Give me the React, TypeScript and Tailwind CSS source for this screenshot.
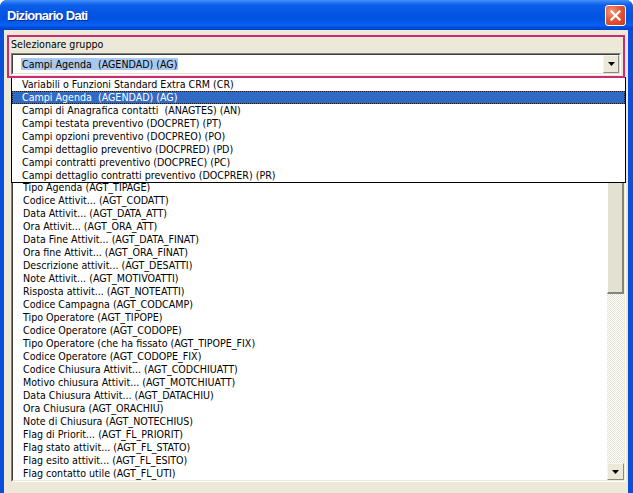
const groups = [
  "Variabili o Funzioni Standard Extra CRM (CR)",
  "Campi Agenda  (AGENDAD) (AG)",
  "Campi di Anagrafica contatti  (ANAGTES) (AN)",
  "Campi testata preventivo (DOCPRET) (PT)",
  "Campi opzioni preventivo (DOCPREO) (PO)",
  "Campi dettaglio preventivo (DOCPRED) (PD)",
  "Campi contratti preventivo (DOCPREC) (PC)",
  "Campi dettaglio contratti preventivo (DOCPRER) (PR)",
];

const fields = [
  "Tipo Agenda (AGT_TIPAGE)",
  "Codice Attivit... (AGT_CODATT)",
  "Data Attivit... (AGT_DATA_ATT)",
  "Ora Attivit... (AGT_ORA_ATT)",
  "Data Fine Attivit... (AGT_DATA_FINAT)",
  "Ora fine Attivit... (AGT_ORA_FINAT)",
  "Descrizione attivit... (AGT_DESATTI)",
  "Note Attivit... (AGT_MOTIVOATTI)",
  "Risposta attivit... (AGT_NOTEATTI)",
  "Codice Campagna (AGT_CODCAMP)",
  "Tipo Operatore (AGT_TIPOPE)",
  "Codice Operatore (AGT_CODOPE)",
  "Tipo Operatore (che ha fissato (AGT_TIPOPE_FIX)",
  "Codice Operatore (AGT_CODOPE_FIX)",
  "Codice Chiusura Attivit... (AGT_CODCHIUATT)",
  "Motivo chiusura Attivit... (AGT_MOTCHIUATT)",
  "Data Chiusura Attivit... (AGT_DATACHIU)",
  "Ora Chiusura (AGT_ORACHIU)",
  "Note di Chiusura (AGT_NOTECHIUS)",
  "Flag di Priorit... (AGT_FL_PRIORIT)",
  "Flag stato attivit... (AGT_FL_STATO)",
  "Flag esito attivit... (AGT_FL_ESITO)",
  "Flag contatto utile (AGT_FL_UTI)",
];

function DownArrow() {
  return (
    <svg width="7" height="4" viewBox="0 0 7 4">
      <path d="M0 0h7L3.5 4z" fill="#000" />
    </svg>
  );
}

function ArrowButton({ className }: { className?: string }) {
  return (
    <div className={"flex items-center justify-center bg-[#ece9d8] border-t border-l border-[#f6f5ef] border-r border-b border-r-[#8a897f] border-b-[#8a897f] " + (className ?? "")}>
      <DownArrow />
    </div>
  );
}

export default function App() {
  return (
    <div className="w-[633px] h-[493px] overflow-hidden flex flex-col bg-[#0a4fdc] rounded-t-[7px] font-['DejaVu_Sans_Condensed','Liberation_Sans',sans-serif] text-[10.6px] leading-[13px] text-black">
      {/* title bar */}
      <div className="h-[30px] shrink-0 flex items-center justify-between pl-[7px] pr-[7px] bg-[linear-gradient(to_bottom,#4593f8_0px,#2b7cf3_2px,#0c5fe9_5px,#0456e6_12px,#0052e0_18px,#045cec_23px,#0a62f2_25px,#0050e0_27px,#0040cc_30px)]">
        <span className="font-['Liberation_Sans',sans-serif] font-bold text-[13px] tracking-[-0.7px] text-white [text-shadow:1px_1px_#0b2a94]">
          Dizionario Dati
        </span>
        <div className="w-[21px] h-[21px] rounded-[3px] border border-white bg-[radial-gradient(circle_at_30%_30%,#f39a78_0%,#e2593a_45%,#c8371a_100%)] flex items-center justify-center">
          <svg width="11" height="11" viewBox="0 0 11 11">
            <path d="M1.5 1.5l8 8M9.5 1.5l-8 8" stroke="#fff" strokeWidth="2.2" strokeLinecap="square" />
          </svg>
        </div>
      </div>

      {/* body */}
      <div className="flex-1 ml-[4px] mr-[5px] bg-[#ece9d8] relative flex flex-col">
        {/* group selector, highlighted */}
        <div className="relative z-10 mt-[5px] ml-[3px] mr-[3px] border-2 border-[#cc2a72] px-[2px] pt-[1px] pb-[1px]">
          <div className="h-[13px] whitespace-pre">Selezionare gruppo</div>
          <div className="mt-[2px] h-[22px] border-t border-l border-[#7f7f7f] border-r border-b border-r-white border-b-white">
            <div className="h-full border-t border-l border-[#404040] border-r border-b border-r-[#e4e1d2] border-b-[#e4e1d2] bg-white flex items-center">
              <div className="flex-1 pl-[8px]">
                <span className="bg-[#aac8ee] px-[1px] whitespace-pre">Campi Agenda  (AGENDAD) (AG)</span>
              </div>
              <ArrowButton className="w-[16px] h-[18px]" />
            </div>
          </div>
        </div>

        {/* open dropdown list */}
        <div className="absolute z-[5] left-[7px] top-[47px] w-[615px] border border-black bg-white">
          {groups.map((g, i) => (
            <div
              key={g}
              className={
                i === 1
                  ? "h-[13px] pl-[10px] whitespace-pre bg-[#316ac5] text-white outline outline-1 outline-dotted outline-[#1a1a1a] -outline-offset-1"
                  : "h-[13px] pl-[10px] whitespace-pre"
              }
            >
              {g}
            </div>
          ))}
        </div>

        {/* fields list box */}
        <div className="ml-[7px] mr-[2px] h-[404px] border-t border-l border-[#808080] border-r border-b border-r-white border-b-white">
          <div className="h-full border-t border-l border-[#404040] border-r border-b border-r-[#ece9d8] border-b-[#ece9d8] bg-white flex overflow-hidden">
            <div className="flex-1 pl-[10px]">
              <div className="h-[101px]" />
              {fields.map((f) => (
                <div key={f} className="h-[13px] whitespace-pre">
                  {f}
                </div>
              ))}
            </div>
            <div className="w-[17px] flex flex-col">
              <ArrowButton className="h-[17px] rotate-180" />
              <div className="flex-1 flex flex-col bg-[repeating-conic-gradient(#ffffff_0%_25%,#e4e2d4_0%_50%)] bg-[length:2px_2px]">
                <div className="mt-[21px] h-[176px] bg-[#e2e1d2] border-t border-l border-white border-r-2 border-b-2 border-r-[#85847a] border-b-[#85847a]" />
              </div>
              <ArrowButton className="h-[17px]" />
            </div>
          </div>
        </div>
      </div>
    </div>
  );
}
